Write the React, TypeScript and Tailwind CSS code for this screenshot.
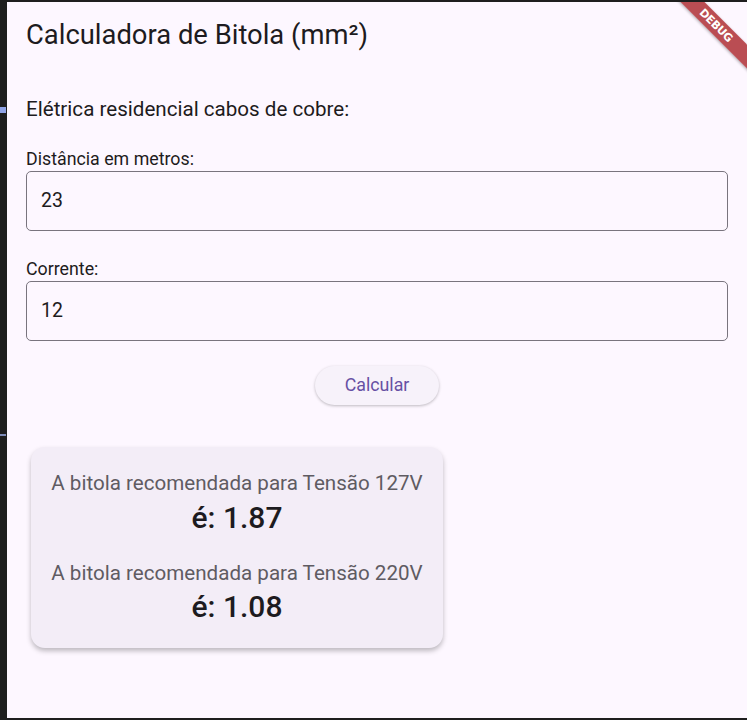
import React from "react";

export default function App() {
  const font = { fontFamily: "Roboto, 'Noto Sans', sans-serif" };
  return (
    <div className="relative w-[747px] h-[720px] bg-[#1e1e1e] pt-[2px] pb-[2px] pl-[7px] overflow-hidden" style={font}>
      <div className="absolute left-0 top-[107px] w-[6px] h-[6px] bg-[#8fa3e6]" />
      <div className="absolute left-0 top-[434px] w-[6px] h-[2px] bg-[#7d8bb8]" />
      <div className="relative w-full h-full bg-[#fdf7ff] overflow-hidden flex flex-col">
        <div className="h-[72px] flex items-center px-[19px] pb-[4px]">
          <h1 className="text-[27.4px] leading-none text-[#1d1b20]">Calculadora de Bitola (mm²)</h1>
        </div>
        <div className="px-[19px] flex flex-col">
          <p className="mt-[24px] text-[20.6px] leading-[22px] text-[#1d1b20]">Elétrica residencial cabos de cobre:</p>
          <label className="mt-[29px] text-[17.8px] leading-[19px] text-[#1d1b20]">Distância em metros:</label>
          <div className="mt-[3px] h-[60px] border border-[#79747e] rounded-[5px] flex items-center px-[14px] text-[19.5px] text-[#1d1b20]">23</div>
          <label className="mt-[28px] text-[17.8px] leading-[19px] text-[#1d1b20]">Corrente:</label>
          <div className="mt-[3px] h-[60px] border border-[#79747e] rounded-[5px] flex items-center px-[14px] text-[19.5px] text-[#1d1b20]">12</div>
          <div className="mt-[25px] flex justify-center">
            <button className="w-[124px] h-[39px] rounded-full bg-[#f7f2fa] text-[#6750a4] text-[17.8px] shadow-[0_1px_3px_rgba(0,0,0,0.25)]">Calcular</button>
          </div>
        </div>
        <div className="mt-[42px] ml-[24px] w-[412px] h-[201px] rounded-[14px] bg-[#f3edf7] shadow-[0_3px_5px_rgba(0,0,0,0.25)] flex flex-col items-center pt-[24px]">
          <p className="text-[20.6px] leading-[24px] text-[#5f5b62] whitespace-nowrap">A bitola recomendada para Tensão 127V</p>
          <p className="mt-[7px] text-[30px] leading-[32px] font-medium text-[#1d1b20]">é: 1.87</p>
          <p className="mt-[27px] text-[20.6px] leading-[24px] text-[#5f5b62] whitespace-nowrap">A bitola recomendada para Tensão 220V</p>
          <p className="mt-[6px] text-[30px] leading-[32px] font-medium text-[#1d1b20]">é: 1.08</p>
        </div>
        <div className="absolute top-[15px] right-[-31px] w-[124px] h-[17px] rotate-45 bg-[#b33a40]/90 flex items-center justify-center shadow-[0_1px_3px_rgba(0,0,0,0.3)]">
          <span className="text-white text-[11px] font-bold leading-none tracking-tight" style={{ fontFamily: "'DejaVu Sans', sans-serif" }}>DEBUG</span>
        </div>
      </div>
    </div>
  );
}
